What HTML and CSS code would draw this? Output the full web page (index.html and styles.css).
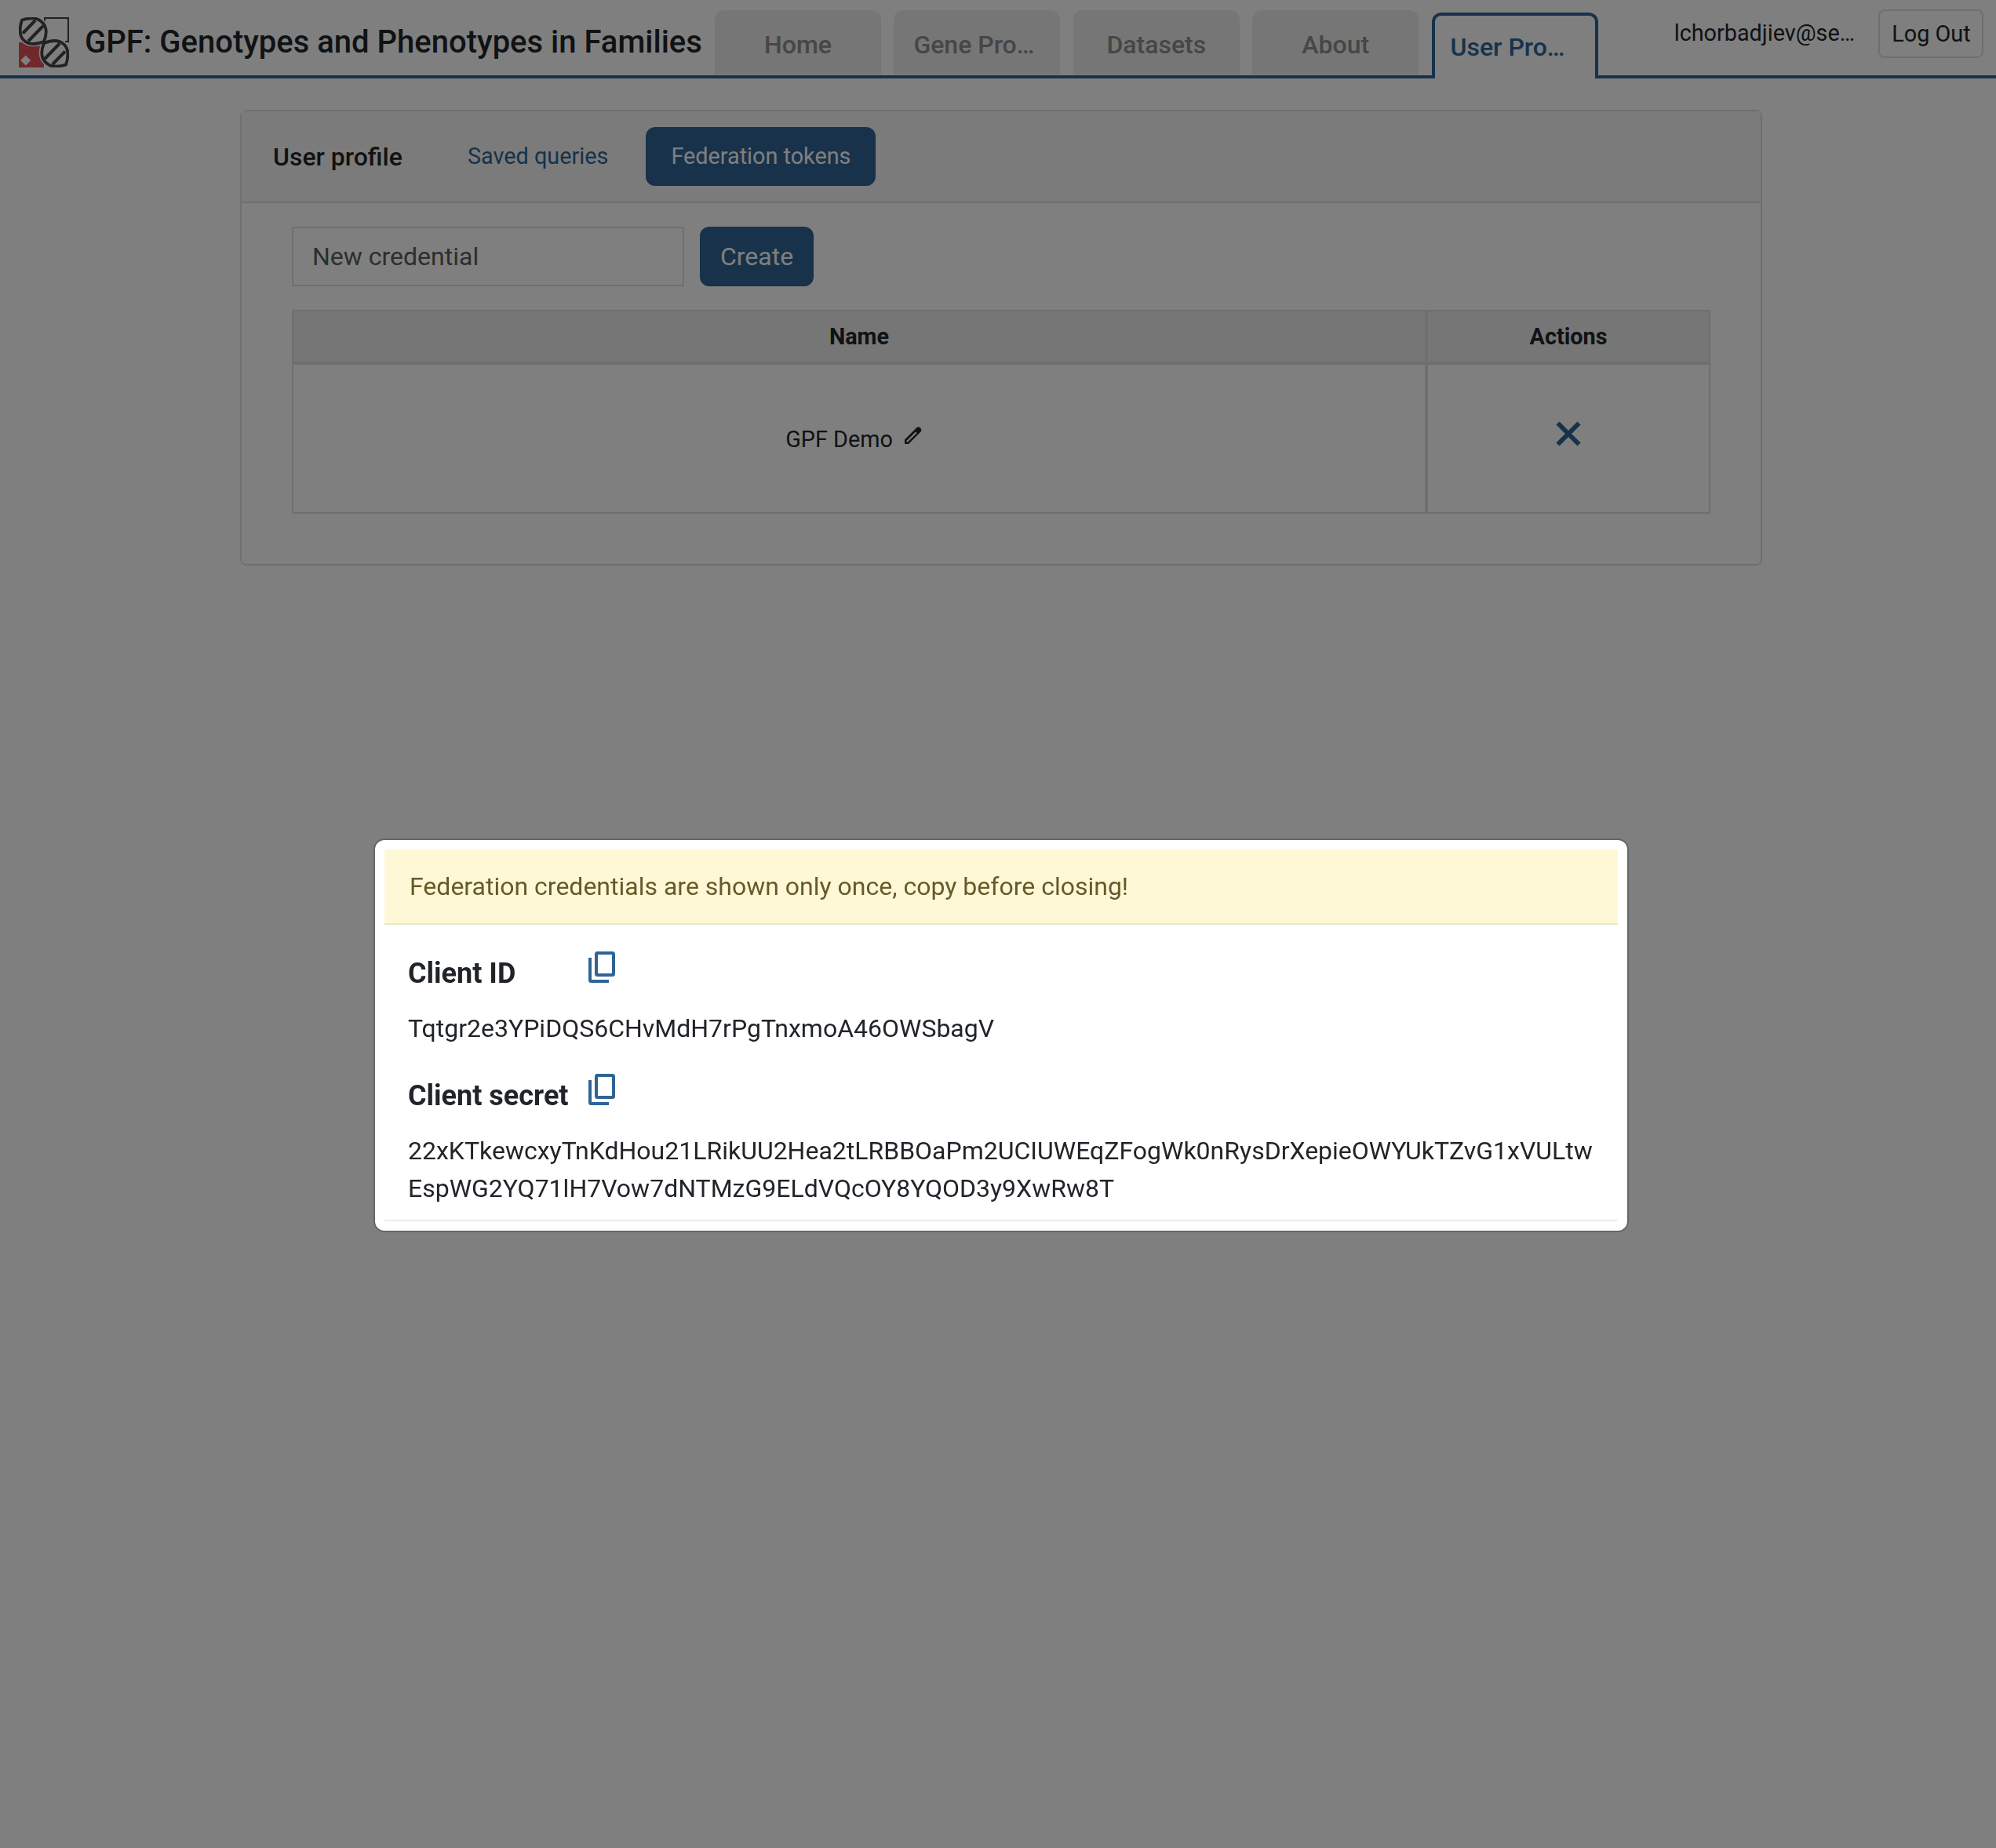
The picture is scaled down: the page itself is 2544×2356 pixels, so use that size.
FILE: index.html
```html
<!DOCTYPE html>
<html lang="en">
<head>
<meta charset="utf-8">
<title>GPF: Genotypes and Phenotypes in Families</title>
<link rel="stylesheet" href="styles.css">
</head>
<body>
<header class="topbar">
  <svg class="logo" viewBox="0 0 64 64" fill="none">
    <path d="M33 5V1H63V31H59" stroke="#444" stroke-width="2"/>
    <path d="M0 32H32V64H0Z" fill="#e05058"/>
    <path d="M8.7 48.5L15.2 55L8.7 61.500L2.200 55Z" fill="#fff"/>
    <path id="halo" d="M4 3.500C12 1 22 0 28 5C36 11 36 21 32 31C22 35 12 35 6 29C0 23 1 12 4 3.500Z" fill="#fff" stroke="#fff" stroke-width="7"/>
    <use href="#halo" transform="rotate(180 32 32)"/>
    <g id="leaf">
      <path d="M4 3.500C12 1 22 0 28 5C36 11 36 21 32 31C22 35 12 35 6 29C0 23 1 12 4 3.500Z" stroke="#444" stroke-width="3.800" stroke-linejoin="round"/>
      <path d="M21 4L5 20.500M31 11L12 30.500" stroke="#444" stroke-width="4"/>
    </g>
    <use href="#leaf" transform="rotate(180 32 32)"/>
  </svg>
  <h1 class="site-title">GPF: Genotypes and Phenotypes in Families</h1>
  <nav class="tabs">
    <a class="tab">Home</a>
    <a class="tab tab-long">Gene Pro…</a>
    <a class="tab">Datasets</a>
    <a class="tab">About</a>
    <a class="tab tab-long tab-active">User Pro…</a>
  </nav>
  <div class="account">
    <span class="email">lchorbadjiev@se…</span>
    <button class="logout">Log Out</button>
  </div>
</header>

<main class="card">
  <div class="card-header">
    <h2 class="card-title">User profile</h2>
    <a class="pill">Saved queries</a>
    <a class="pill pill-active">Federation tokens</a>
  </div>
  <div class="card-body">
    <form class="create-row">
      <input class="name-input" type="text" placeholder="New credential">
      <button class="create" type="button">Create</button>
    </form>
    <div class="table">
      <div class="cell head">Name</div>
      <div class="cell head">Actions</div>
      <div class="cell name-cell">
        <span>GPF Demo</span>
        <svg class="pencil" viewBox="0 0 22 22"><path fill-rule="evenodd" d="M0 22V16.500L15 1.500Q17.500-1 20 1.500Q22.500 4 20.500 6.500L5 22ZM2.500 19.500H4L15.500 8L14 6.500L2.500 18Z" fill="#212529"/></svg>
      </div>
      <div class="cell action-cell">
        <svg class="remove" viewBox="0 0 32 32"><path d="M2.500 2.500L29.500 29.500M29.500 2.500L2.500 29.500" stroke="#2f6495" stroke-width="6"/></svg>
      </div>
    </div>
  </div>
</main>

<div class="backdrop">
  <section class="modal">
    <div class="warning">Federation credentials are shown only once, copy before closing!</div>
    <div class="credentials">
      <div class="label-row">
        <h3 class="label">Client ID</h3>
        <svg class="copy" viewBox="0 0 34 40"><path d="M9.500 2H30.500Q32 2 32 3.500V28.500Q32 30 30.500 30H11.500Q10 30 10 28.500V3.500Q10 2 11.500 2M2 8V36.500Q2 38 3.500 38H26" fill="none" stroke="#2f6495" stroke-width="4"/></svg>
      </div>
      <div class="value">Tqtgr2e3YPiDQS6CHvMdH7rPgTnxmoA46OWSbagV</div>
      <div class="label-row">
        <h3 class="label">Client secret</h3>
        <svg class="copy" viewBox="0 0 34 40"><path d="M9.500 2H30.500Q32 2 32 3.500V28.500Q32 30 30.500 30H11.500Q10 30 10 28.500V3.500Q10 2 11.500 2M2 8V36.500Q2 38 3.500 38H26" fill="none" stroke="#2f6495" stroke-width="4"/></svg>
      </div>
      <div class="value">22xKTkewcxyTnKdHou21LRikUU2Hea2tLRBBOaPm2UCIUWEqZFogWk0nRysDrXepieOWYUkTZvG1xVULtw<br>EspWG2YQ71lH7Vow7dNTMzG9ELdVQcOY8YQOD3y9XwRw8T</div>
    </div>
  </section>
</div>
</body>
</html>
```
FILE: styles.css
```css
* { box-sizing: border-box; }
body {
  margin: 0;
  background: #fff;
  color: #212529;
  font-family: Roboto, sans-serif;
  font-size: 32px;
  line-height: 48px;
}
h1, h2, h3 { margin: 0; }
button, input { font-family: inherit; color: inherit; }

.topbar {
  display: flex;
  align-items: flex-start;
  height: 100px;
  padding: 0 16px 0 24px;
  border-bottom: 4px solid #2f6495;
}
.logo { flex: none; width: 64px; height: 64px; margin-top: 22px; }
.site-title {
  flex: none;
  width: 823px;
  padding: 30px 0 0 20px;
  font-size: 40px;
  font-weight: 500;
  white-space: nowrap;
}
.tabs { display: flex; flex: none; gap: 16.400px; padding-top: 13px; }
.tab {
  width: 212px;
  height: 82px;
  padding-top: 20px;
  border-radius: 12px 12px 0 0;
  background: #ededed;
  color: #8c8c8c;
  font-weight: 500;
  text-align: center;
  white-space: nowrap;
}
.tab-long { padding-left: 25px; text-align: left; }
.tab-active {
  height: 84px;
  margin-top: 3px;
  padding: 16px 0 0 20px;
  border: 4px solid #2f6495;
  border-bottom: 0;
  background: #fff;
  color: #2f6495;
}
.account { display: flex; flex: none; gap: 30px; margin-left: auto; padding-top: 12px; }
.email { font-size: 28.800px; line-height: 60px; }
.logout {
  width: 134px;
  height: 62px;
  padding: 0 0 0 1px;
  border: 2px solid #dfdfdf;
  border-radius: 8px;
  background: #fff;
  font-size: 28.800px;
  line-height: 56px;
}

.card {
  width: 1940px;
  height: 581px;
  margin: 40px 0 0 306px;
  border: 2px solid #dfdfdf;
  border-radius: 8px;
}
.card-header {
  display: flex;
  align-items: center;
  height: 117px;
  padding: 0 0 0 40px;
  border-bottom: 2px solid #dfdfdf;
  background: #f7f7f7;
}
.card-title { width: 215px; font-size: 32px; font-weight: 500; }
.pill {
  height: 75px;
  padding: 0 32px 0 33px;
  border-radius: 12px;
  color: #2f6495;
  font-size: 28.800px;
  line-height: 74px;
  white-space: nowrap;
}
.pill-active { margin-left: 16px; padding-left: 32px; background: #2f6495; color: #fff; }
.card-body { padding: 30px 64px; }
.create-row { display: flex; gap: 20px; margin-bottom: 30px; }
.name-input {
  width: 500px;
  height: 76px;
  padding: 0 24px;
  border: 2px solid #dfdfdf;
  background: #fff;
  font-size: 32px;
}
.name-input::placeholder { color: #595c5f; opacity: 1; }
.create {
  width: 145px;
  height: 76px;
  padding: 0;
  border: 0;
  border-radius: 12px;
  background: #2f6495;
  color: #fff;
  font-size: 32px;
}
.table {
  display: grid;
  grid-template-columns: 1442px 358px;
  grid-template-rows: 64px 188px;
  gap: 4px;
  width: 1808px;
  border: 2px solid #dfdfdf;
  background: #dfdfdf;
}
.cell { display: flex; justify-content: center; background: #fff; font-size: 28.800px; }
.head { align-items: center; background: #ededed; font-weight: 700; }
.name-cell { gap: 15px; padding: 71px 14px 0 0; }
.pencil { width: 22px; height: 22px; margin-top: 8px; }
.action-cell { padding-top: 72px; }
.remove { width: 32px; height: 32px; }

.backdrop {
  position: fixed;
  inset: 0;
  display: flex;
  justify-content: center;
  align-items: flex-start;
  padding: 1069px 0 0 8px;
  background: rgba(0, 0, 0, .5);
}
.modal {
  width: 1600px;
  height: 502px;
  padding: 12px;
  border: 2px solid rgba(0, 0, 0, .2);
  border-radius: 14px;
  background: #fff;
  background-clip: padding-box;
}
.warning {
  height: 96px;
  padding: 23px 32px;
  border-bottom: 2px solid #e8e7cb;
  background: #fff8d6;
  color: #665a29;
}
.credentials { height: 378px; padding: 34px 30px 0; border-bottom: 2px solid #ebebeb; }
.label-row { display: flex; height: 64px; }
.label { width: 230px; padding-top: 4px; font-size: 36px; font-weight: 700; }
.copy { width: 34px; height: 40px; }
.value { white-space: nowrap; margin-bottom: 34px; padding-top: 10px; }
```
